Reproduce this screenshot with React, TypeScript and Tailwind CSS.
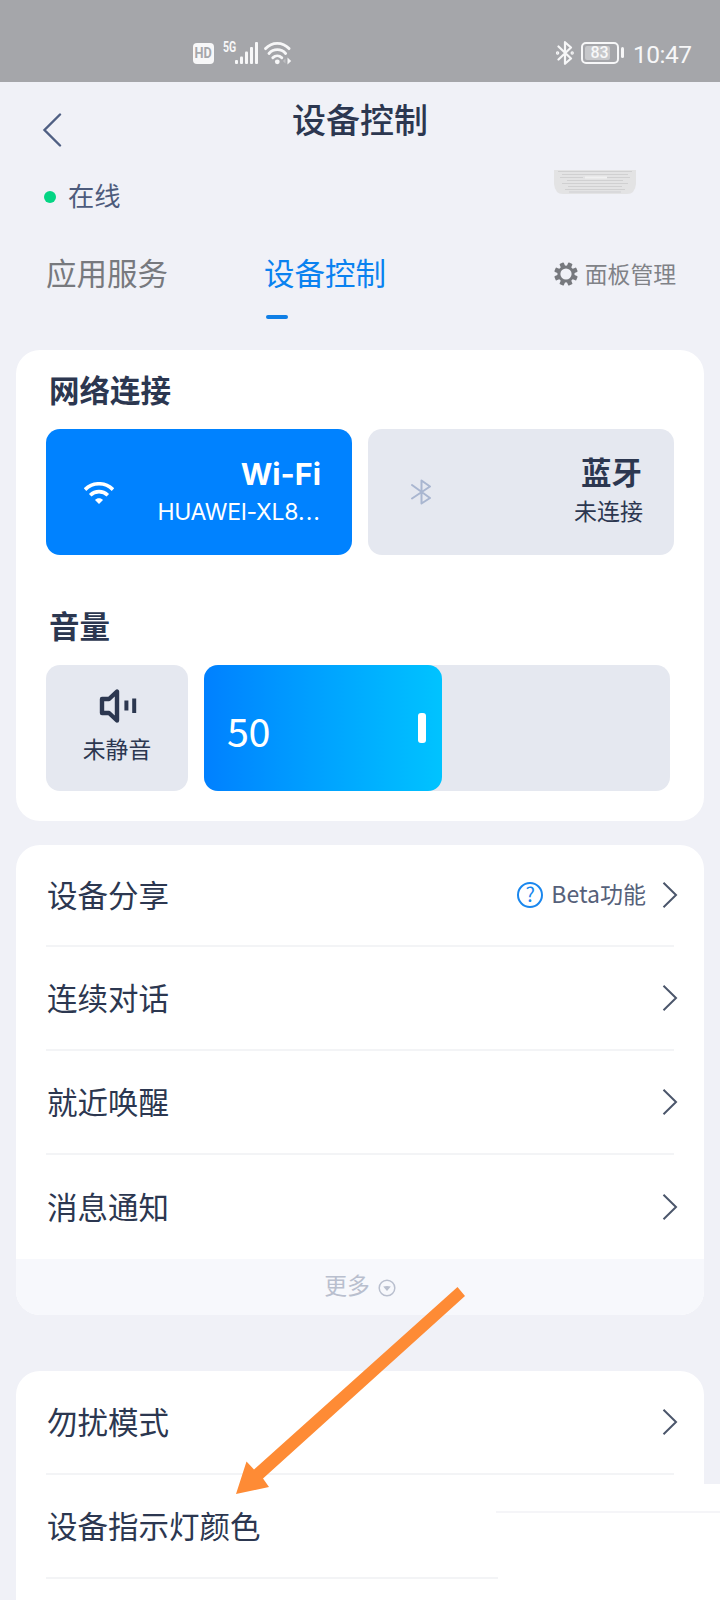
import type { ReactNode } from "react";

const shareRows = ["连续对话", "就近唤醒", "消息通知"];

function BluetoothIcon({ className, strokeWidth }: { className: string; strokeWidth: number }) {
  return (
    <svg viewBox="0 0 20 26" className={className} fill="none" stroke="currentColor" strokeWidth={strokeWidth} strokeLinejoin="round" strokeLinecap="round">
      <path d="M1 6 L19 19 L10.5 24.5 V1.5 L19 7.5 L1 19.5" />
    </svg>
  );
}

function Chevron() {
  return (
    <svg viewBox="0 0 16 28" className="h-7 w-4 shrink-0" fill="none" stroke="#4b566b" strokeWidth="2">
      <path d="M1.5 1.8 L14 14 L1.5 26.2" />
    </svg>
  );
}

function StatusBar() {
  return (
    <div className="flex h-[82px] items-start bg-[#a5a6aa] pl-[193px] pr-7 text-[#f7f7f8]">
      <div className="mt-[43px] flex h-[21px] w-[21px] items-center justify-center rounded-[4px] bg-[#f7f7f8] text-[#a5a6aa]">
        <span className="scale-x-85 font-['Roboto',sans-serif] text-[15px] leading-none font-bold">HD</span>
      </div>
      <span className="mt-[40px] ml-[9px] w-[12px] origin-left scale-x-75 font-['Roboto',sans-serif] text-[14px] leading-[14px] font-bold">5G</span>
      <svg viewBox="0 0 24 22" className="mt-[42px] h-[22px] w-6" fill="currentColor">
        <rect x="0" y="18" width="3" height="4" rx="1" />
        <rect x="5" y="14.5" width="3" height="7.5" rx="1" />
        <rect x="10" y="9.5" width="3" height="12.5" rx="1" />
        <rect x="15" y="5" width="3" height="17" rx="1" />
        <rect x="20" y="0" width="3" height="22" rx="1" />
      </svg>
      <svg viewBox="0 0 28 24" className="mt-[41px] ml-[5px] h-6 w-7" fill="none" stroke="currentColor" strokeWidth="2.9" strokeLinecap="round">
        <path d="M1.6 7.6 C8 0.6 18.5 0.6 25 7.6" />
        <path d="M5 12.4 C9.6 7.4 17 7.4 21.6 12.4" />
        <path d="M8.8 16.8 C11.4 14.2 15.2 14.2 17.8 16.8" />
        <circle cx="13.3" cy="20.8" r="2.4" fill="currentColor" stroke="none" />
        <path d="M23.5 16.6 L27.2 20 L23.5 23.4 Z" fill="currentColor" stroke="none" />
        <path d="M21.5 17.6 L18.8 20 L21.5 22.4 Z" fill="#bdbec1" stroke="none" />
      </svg>

      <div className="ml-auto flex items-start">
        <svg viewBox="0 0 18 24" className="mt-[41px] h-6 w-[18px]" fill="none" stroke="currentColor" strokeWidth="2.2" strokeLinejoin="round" strokeLinecap="round">
          <path d="M2.5 5.5 L15 17.5 L9 22.8 V1.2 L15 6.5 L2.5 18.5" />
          <circle cx="1.6" cy="12" r="0.6" fill="currentColor" />
          <circle cx="16.2" cy="12" r="0.6" fill="currentColor" />
        </svg>
        <div className="mt-[42px] ml-[7px] flex h-[22px] w-[38px] rounded-[5px] border-2 border-[#f7f7f8] p-[2px]">
          <div className="flex w-[25px] items-center justify-center rounded-[2px] bg-[#c6c7ca] pl-[4px] font-['Roboto',sans-serif] text-[16px] leading-none font-medium">
            83
          </div>
        </div>
        <div className="mt-[47px] ml-[2px] h-[11px] w-[3px] rounded-full bg-[#f7f7f8]" />
        <span className="mt-[41px] ml-[9px] w-[59px] font-['Roboto',sans-serif] text-[24.5px] leading-7 tracking-[-0.5px] whitespace-nowrap">10:47</span>
      </div>
    </div>
  );
}

function Header() {
  return (
    <header className="flex h-[88px] items-start">
      <svg viewBox="0 0 20 34" className="mt-[31px] ml-[42px] h-[34px] w-5" fill="none" stroke="#4f5f83" strokeWidth="2.4" strokeLinecap="round">
        <path d="M18 1.5 L2.5 17 L18 32.5" />
      </svg>
      <h1 className="mt-[13px] ml-[230px] text-[34px] leading-[48px] font-medium text-[#2c3750]">设备控制</h1>
    </header>
  );
}

function DeviceStatus() {
  return (
    <div className="flex h-[70px] items-start">
      <span className="mt-[21px] ml-[44px] h-3 w-3 rounded-full bg-[#04d584]" />
      <span className="mt-[5px] ml-3 text-[26.3px] leading-10 text-[#4d5b7c]">在线</span>
      {/* bottom edge of the speaker */}
      <svg viewBox="0 0 84 24" className="ml-auto mr-[83px] h-6 w-[84px]">
        <path d="M1 0 H83 V14 Q82 24 74 24 H10 Q2 24 1 14 Z" fill="#e3e3e4" />
        <path d="M5 1.5 H79 M9 4.5 H75 M7 7.5 H30 M54 7.5 H77 M14 10.5 H70 M9 13.5 H75 M15 16.5 H69 M12 19.5 H72 M16 22 H68" stroke="#d0d0d1" strokeWidth="1.2" />
        <path d="M32 7.5 H54" stroke="#f0f0f1" strokeWidth="2" />
      </svg>
    </div>
  );
}

function Tabs() {
  return (
    <nav className="flex h-[110px] items-start">
      <span className="mt-[10px] ml-[46px] w-[218px] text-[30.5px] leading-[44px] text-[#77797e]">应用服务</span>
      <div className="mt-[10px]">
        <div className="text-[30.5px] leading-[44px] text-[#0a82f0]">设备控制</div>
        <div className="mt-[21px] ml-[2px] h-1 w-[22px] rounded-full bg-[#0f7fe6]" />
      </div>
      <div className="mt-[17px] ml-auto mr-[44px] flex items-center gap-[7px]">
        <svg viewBox="0 0 24 24" className="h-6 w-6">
          <g fill="#77797e">
            <rect x="9.7" y="0.2" width="4.6" height="23.6" rx="0.8" transform="rotate(22.5 12 12)" />
            <rect x="9.7" y="0.2" width="4.6" height="23.6" rx="0.8" transform="rotate(67.5 12 12)" />
            <rect x="9.7" y="0.2" width="4.6" height="23.6" rx="0.8" transform="rotate(112.5 12 12)" />
            <rect x="9.7" y="0.2" width="4.6" height="23.6" rx="0.8" transform="rotate(157.5 12 12)" />
            <circle cx="12" cy="12" r="8.6" />
          </g>
          <circle cx="12" cy="12" r="5.6" fill="#f0f1f7" />
        </svg>
        <span className="text-[22.8px] leading-[34px] text-[#808287]">面板管理</span>
      </div>
    </nav>
  );
}

function ControlCard() {
  return (
    <section className="mx-4 h-[471px] rounded-[24px] bg-white px-[30px] pt-[17px] text-[#2c3750]">
      <h2 className="ml-[3px] text-[30.5px] leading-[44px] font-bold">网络连接</h2>
      <div className="mt-[18px] flex gap-4">
        <div className="flex h-[126px] w-[306px] rounded-[14px] bg-[#0082ff] pr-[31px] text-white">
          <svg viewBox="0 0 30 22" className="mt-[53px] ml-[38px] h-[22px] w-[30px]" fill="none" stroke="currentColor" strokeWidth="3.6">
            <path d="M1 7.6 C9 -0.2 21 -0.2 29 7.6" />
            <path d="M6.2 13.2 C11.2 8.4 18.8 8.4 23.8 13.2" />
            <path d="M15 22 L11 18 C13 15.8 17 15.8 19 18 Z" fill="currentColor" stroke="none" />
          </svg>
          <div className="mt-[26px] ml-auto text-right font-['Inter',sans-serif]">
            <div className="text-[30.5px] leading-[38px] font-bold">Wi-Fi</div>
            <div className="mt-[3px] text-[23px] leading-8 tracking-[-0.3px]">
              HUAWEI-XL8<span className="tracking-[1px]">...</span>
            </div>
          </div>
        </div>
        <div className="flex h-[126px] w-[306px] rounded-[14px] bg-[#e5e8f0] pr-[31px]">
          <BluetoothIcon className="mt-[50px] ml-[43px] h-[26px] w-5 text-[#a9b6d0]" strokeWidth={2} />
          <div className="mt-[20px] ml-auto text-right">
            <div className="mr-[1px] text-[30.5px] leading-[44px] font-bold">蓝牙</div>
            <div className="mt-[1px] text-[23px] leading-8">未连接</div>
          </div>
        </div>
      </div>

      <h2 className="mt-[48px] ml-[3px] text-[30.5px] leading-[44px] font-bold">音量</h2>
      <div className="mt-[18px] flex gap-4">
        <div className="flex h-[126px] w-[142px] flex-col items-center rounded-[14px] bg-[#e5e8f0]">
          <svg viewBox="0 0 38 36" className="mt-[23px] ml-[1px] h-9 w-[38px]" fill="none" stroke="#2c3750" strokeWidth="4.4" strokeLinejoin="round">
            <path d="M3 11 H10 L18 3.5 V32.5 L10 25 H3 Z" />
            <path d="M27.4 12.5 V22.5 M35.2 10.5 V25" strokeWidth="4" />
          </svg>
          <span className="mt-[9px] text-[22.8px] leading-8">未静音</span>
        </div>
        <div className="h-[126px] w-[466px] rounded-[14px] bg-[#e5e8f0]">
          <div className="flex h-full w-[238px] items-center justify-between rounded-[14px] bg-linear-to-r from-[#0080ff] to-[#00c3ff] pr-4 pl-[23px]">
            <span className="mt-1 text-[39.5px] leading-none tracking-[-0.5px] text-white">50</span>
            <span className="h-[30px] w-2 rounded-[3px] bg-white" />
          </div>
        </div>
      </div>
    </section>
  );
}

function Row({ label, first, children }: { label: string; first?: boolean; children?: ReactNode }) {
  return (
    <div className={first ? "flex h-[102px] items-center" : "flex h-[104px] items-center"}>
      <span className="mb-[3px] ml-[1px] text-[30.5px] leading-[44px] text-[#2c3750]">{label}</span>
      <div className="-mr-[4px] ml-auto flex items-center">
        {children}
        <Chevron />
      </div>
    </div>
  );
}

function FeatureCard() {
  return (
    <section className="mx-4 mt-6 overflow-hidden rounded-[24px] bg-white">
      <div className="divide-y-2 divide-[#f3f4f6] px-[30px]">
        <Row label="设备分享" first>
          <span className="mr-[8px] flex h-[26px] w-[26px] items-center justify-center rounded-full border-2 border-[#1a87ee] text-[20px] leading-[30px] text-[#1a87ee]">
            <span className="-mt-[3px]">?</span>
          </span>
          <span className="mr-4 mb-[4px] text-[23px] leading-8 text-[#56617a]">Beta功能</span>
        </Row>
        {shareRows.map((label) => (
          <Row key={label} label={label} />
        ))}
      </div>
      <div className="flex h-[56px] items-center justify-center gap-2 bg-[#f7f8fc] pb-[4px] text-[#b9bfce]">
        <span className="text-[22.8px] leading-8">更多</span>
        <svg viewBox="0 0 18 18" className="mt-[5px] h-[18px] w-[18px]">
          <circle cx="9" cy="9" r="7.8" fill="none" stroke="currentColor" strokeWidth="1.5" />
          <path d="M5.2 7.6 Q9 6.4 12.8 7.6 L9 12 Z" fill="currentColor" />
        </svg>
      </div>
    </section>
  );
}

function ModeCard() {
  return (
    <section className="mx-4 mt-[56px] h-[260px] rounded-t-[24px] bg-white px-[30px]">
      <div className="divide-y-2 divide-[#f3f4f6]">
        <Row label="勿扰模式" />
        <Row label="设备指示灯颜色" />
        <div className="h-12" />
      </div>
    </section>
  );
}

export default function App() {
  return (
    <div className="relative h-[1600px] w-[720px] overflow-hidden bg-[#f0f1f7] font-['Noto_Sans_CJK_SC',sans-serif]">
      <StatusBar />
      <Header />
      <DeviceStatus />
      <Tabs />
      <ControlCard />
      <FeatureCard />
      <ModeCard />

      {/* blank panel over the bottom right corner */}
      <div className="absolute right-0 bottom-0 h-[116px] w-[222px] bg-white pt-[27px]">
        <div className="-ml-[2px] h-[2px] bg-[#f5f5f8]" />
      </div>

      {/* pointer arrow */}
      <svg viewBox="0 0 240 214" className="absolute top-[1284px] left-[230px] h-[214px] w-[240px]">
        <path d="M227.5 3 L235 12 L33 194.5 L39 203 L6 210 L16.5 177.5 L24 185.5 Z" fill="#fe8b35" />
      </svg>
    </div>
  );
}
